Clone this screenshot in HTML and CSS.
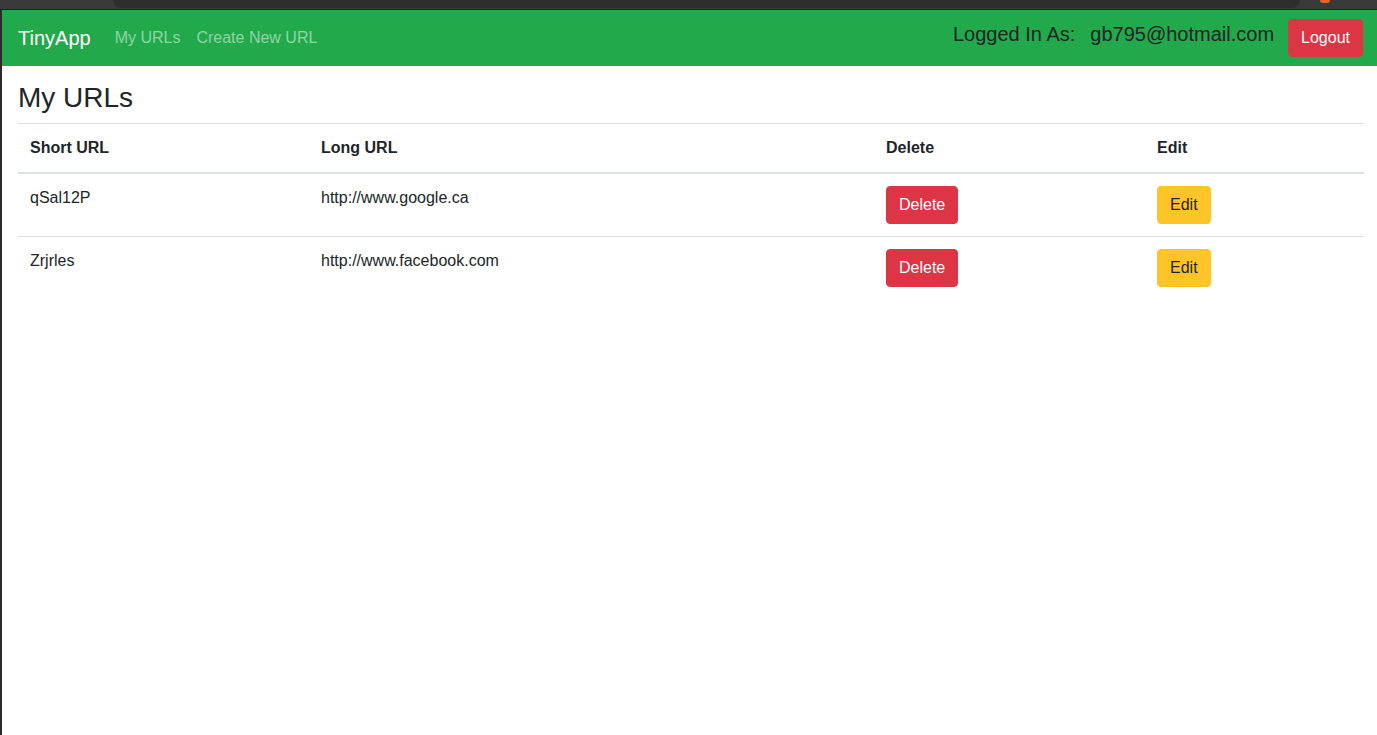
FILE: index.html
```html
<!DOCTYPE html>
<html lang="en">
<head>
<meta charset="utf-8">
<title>TinyApp</title>
<link rel="stylesheet" href="styles.css">
</head>
<body>
<div class="chrome">
  <div class="chrome-tab"></div>
  <div class="chrome-side"><span class="chrome-dot"></span></div>
</div>
<div class="page">
  <nav class="navbar">
    <a class="brand" href="#">TinyApp</a>
    <a class="nav-link" href="#">My URLs</a>
    <a class="nav-link" href="#">Create New URL</a>
    <div class="spacer"></div>
    <h5 class="login"><span class="login-label">Logged In As:</span><span>gb795@hotmail.com</span></h5>
    <button class="btn btn-danger">Logout</button>
  </nav>
  <main class="content">
    <h3 class="title">My URLs</h3>
    <table class="table">
      <colgroup>
        <col class="c1"><col class="c2"><col class="c3"><col class="c4">
      </colgroup>
      <thead>
        <tr><th>Short URL</th><th>Long URL</th><th>Delete</th><th>Edit</th></tr>
      </thead>
      <tbody>
        <tr>
          <td>qSal12P</td>
          <td>http://www.google.ca</td>
          <td><button class="btn btn-danger">Delete</button></td>
          <td><button class="btn btn-warning">Edit</button></td>
        </tr>
        <tr>
          <td>Zrjrles</td>
          <td>http://www.facebook.com</td>
          <td><button class="btn btn-danger">Delete</button></td>
          <td><button class="btn btn-warning">Edit</button></td>
        </tr>
      </tbody>
    </table>
  </main>
</div>
</body>
</html>
```
FILE: styles.css
```css
* { box-sizing: border-box; }
html, body { margin: 0; padding: 0; height: 100%; }
body {
  font-family: "Liberation Sans", Arial, Helvetica, sans-serif;
  font-size: 16px;
  line-height: 1.5;
  color: #212529;
  background: #ffffff;
  display: flex;
  flex-direction: column;
  overflow: hidden;
}
.chrome {
  height: 10px;
  flex: none;
  background: #3a3a3a;
  border-bottom: 1px solid #222222;
  display: flex;
}
.chrome-tab {
  margin-left: 113px;
  width: 1187px;
  height: 8px;
  background: #2e2e2e;
  border-radius: 0 0 8px 8px;
}
.chrome-side { flex: 1; position: relative; }
.chrome-dot {
  position: absolute;
  left: 20px;
  top: 0;
  width: 10px;
  height: 3px;
  border-radius: 0 0 5px 5px;
  background: #e8621a;
}
.page {
  flex: 1;
  border-left: 2px solid #2b2b2b;
  display: flex;
  flex-direction: column;
}
.navbar {
  background: #22a94b;
  height: 56px;
  padding: 8px 14px 8px 16px;
  display: flex;
  align-items: center;
}
.brand {
  color: #ffffff;
  font-size: 20px;
  line-height: 30px;
  padding: 5px 0;
  margin-right: 16px;
  text-decoration: none;
}
.nav-link {
  color: rgba(255, 255, 255, 0.5);
  padding: 8px;
  text-decoration: none;
  line-height: 24px;
}
.spacer { flex: 1; }
.login {
  margin: 0 14px 8px 0;
  font-size: 20px;
  font-weight: 400;
  line-height: 24px;
  color: #212529;
}
.login-label { margin-right: 15px; }
.btn {
  font-family: inherit;
  font-size: 16px;
  line-height: 24px;
  padding: 6px 12px;
  border: 1px solid transparent;
  border-radius: 4px;
  cursor: pointer;
}
.btn-danger { background: #dc3545; border-color: #dc3545; color: #ffffff; }
.btn-warning { background: #ffc427; border-color: #ffc427; color: #212529; }
.content {
  padding: 15px 13px 0 16px;
}
.title {
  margin: 0 0 8px 0;
  font-size: 28px;
  font-weight: 500;
  line-height: 34px;
}
.table {
  width: 100%;
  border-collapse: collapse;
}
.c1 { width: 291px; }
.c2 { width: 565px; }
.c3 { width: 271px; }
.c4 { width: auto; }
.table th, .table td {
  padding: 12px;
  text-align: left;
  vertical-align: top;
  border-top: 1px solid #dee2e6;
}
.table th { font-weight: 700; }
.table thead th { border-bottom: 2px solid #dee2e6; }
.table tbody tr:first-child td { border-top: 0; }
```
